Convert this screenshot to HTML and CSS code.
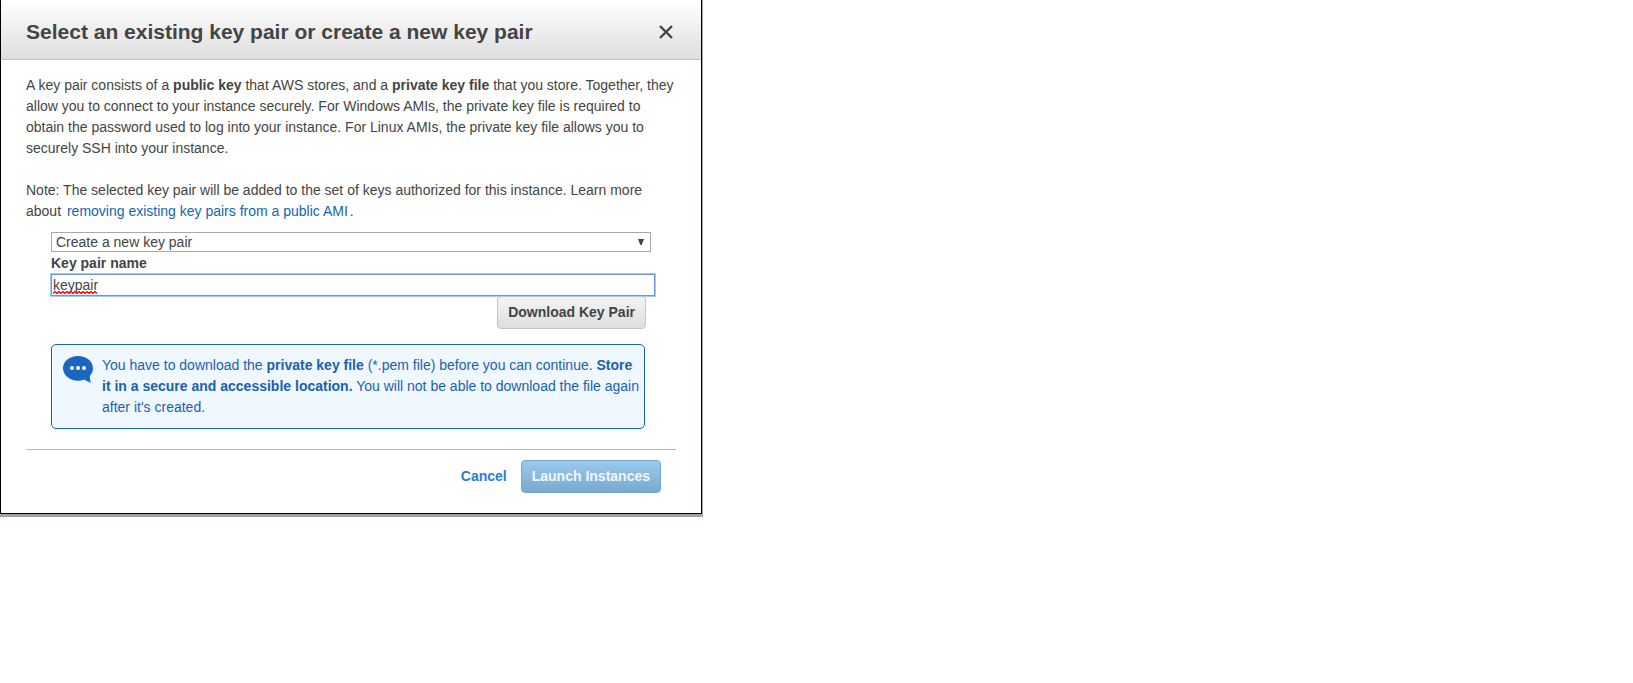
FILE: index.html
```html
<!DOCTYPE html>
<html lang="en">
<head>
<meta charset="utf-8">
<title>Select an existing key pair or create a new key pair</title>
<link rel="stylesheet" href="styles.css">
</head>
<body>
<div class="frame">
<main class="dialog" role="dialog" aria-labelledby="dialog-title">
  <header class="dialog-header">
    <h1 class="dialog-title" id="dialog-title">Select an existing key pair or create a new key pair</h1>
    <button class="close-button" type="button" aria-label="Close">
      <svg width="14" height="14" viewBox="0 0 14 14" aria-hidden="true"><path d="M1 1 13 13M13 1 1 13" fill="none" stroke="#444" stroke-width="2.4"/></svg>
    </button>
  </header>
  <form class="dialog-body">
    <p class="text">A key pair consists of a <b>public key</b> that AWS stores, and a <b>private key file</b> that you store. Together, they allow you to connect to your instance securely. For Windows AMIs, the private key file is required to obtain the password used to log into your instance. For Linux AMIs, the private key file allows you to securely SSH into your instance.</p>
    <p class="text">Note: The selected key pair will be added to the set of keys authorized for this instance. Learn more about <a class="link" href="#removing-key-pairs">removing existing key pairs from a public AMI</a>.</p>
    <div class="fields">
      <div class="select-wrap">
        <select class="select" aria-label="Key pair option">
          <option>Create a new key pair</option>
        </select>
        <svg class="select-arrow" width="6" height="6" viewBox="0 0 6 6" aria-hidden="true"><path d="M0 0h6L3.600 6H2.400z" fill="#444"/></svg>
      </div>
      <label class="label" for="key-name">Key pair name</label>
      <div class="input-wrap">
        <input class="input" id="key-name" type="text" value="keypair" spellcheck="false">
        <svg class="spelling-mark" width="45" height="3" viewBox="0 0 45 3" aria-hidden="true"><path d="M0 2.500l2-2 2 2 2-2 2 2 2-2 2 2 2-2 2 2 2-2 2 2 2-2 2 2 2-2 2 2 2-2 2 2 2-2 2 2 2-2 2 2 2-2 2 2" fill="none" stroke="#f00" stroke-width="1.3"/></svg>
      </div>
      <div class="download-row">
        <button class="button button-plain" type="button">Download Key Pair</button>
      </div>
      <div class="notice">
        <svg class="notice-icon" width="30" height="27" viewBox="0 0 30 27" aria-hidden="true">
          <path d="M15 0C23.300 0 30 5.300 30 12.200c0 3-1.200 5.700-3.200 7.800-.1 2.300.3 4.500 1.200 6.800-2.700-.7-4.800-1.800-6.600-3.200-1.900.8-4.100 1.200-6.400 1.200C6.700 24.800 0 19.200 0 12.300S6.700 0 15 0z" fill="#1a66c0"/>
          <circle cx="9" cy="12" r="2" fill="#fff"/><circle cx="15" cy="12" r="2" fill="#fff"/><circle cx="21" cy="12" r="2" fill="#fff"/>
        </svg>
        <p class="notice-text">You have to download the <b>private key file</b> (*.pem file) before you can continue. <b>Store it in a secure and accessible location.</b> You will not be able to download the file again after it's created.</p>
      </div>
    </div>
    <footer class="dialog-footer">
      <button class="cancel-button" type="button">Cancel</button>
      <button class="button button-primary" type="button">Launch Instances</button>
    </footer>
  </form>
</main>
</div>
</body>
</html>
```
FILE: styles.css
```css
* {
  box-sizing: border-box;
}

body {
  margin: 0;
  background: #fff;
  color: #444;
  font: 14px/21px "Liberation Sans", Arial, sans-serif;
}

button,
input,
select {
  margin: 0;
  color: inherit;
  font: inherit;
}

.frame {
  max-width: 703px;
  padding: 0 1px 3px 0;
  background: #a0a5ab;
}

.dialog {
  border: 1px solid #000;
  border-top: 0;
  background: #fff;
}

.dialog-header {
  display: flex;
  align-items: center;
  justify-content: space-between;
  padding: 18px 28px 13px 25px;
  border-bottom: 1px solid #c4c4c4;
  background: linear-gradient(#fff, #dedede);
}

.dialog-title {
  margin: 0;
  font-size: 21px;
  line-height: 28px;
}

.close-button {
  display: flex;
  padding: 0;
  border: 0;
  background: none;
}

.dialog-body {
  padding: 15px 25px 20px;
}

.text {
  margin: 0 0 21px;
}

.link {
  margin: 0 2px;
  color: #1166bb;
  text-decoration: none;
}

.fields {
  margin-top: -11px;
  padding: 0 21px 0 25px;
}

.select-wrap,
.input-wrap {
  position: relative;
}

.select-wrap {
  margin: 0 4px 1px 0;
}

.select {
  display: block;
  width: 100%;
  height: 20px;
  padding: 0 4px;
  border: 1px solid #a9a9a9;
  border-radius: 0;
  background: #fff;
  line-height: 18px;
  appearance: none;
}

.select-arrow {
  position: absolute;
  top: 7px;
  right: 7px;
}

.label {
  display: block;
  font-weight: bold;
}

.input {
  display: block;
  width: 100%;
  height: 22px;
  padding: 0 1px;
  border: 1px solid #7095dc;
  outline: 1px solid #a6c8fa;
}

.spelling-mark {
  position: absolute;
  top: 17px;
  left: 2px;
}

.download-row {
  display: flex;
  justify-content: flex-end;
  margin: 0 9px 15px 0;
}

.button {
  height: 33px;
  padding: 0 10px;
  border: 1px solid #c4c4c4;
  border-radius: 4px;
  font-weight: bold;
}

.button-plain {
  background: linear-gradient(#f4f4f4, #dedede);
}

.button-primary {
  border-color: #76a9d0;
  background: linear-gradient(#99c9ed, #78aacf);
  color: #f1f7fc;
}

.notice {
  display: flex;
  gap: 9px;
  margin-right: 10px;
  padding: 10px 4px 10px 11px;
  border: 1px solid #1166bb;
  border-radius: 5px;
  background: #f0f8ff;
  color: #1a5fb4;
}

.notice-icon {
  flex: none;
  margin-top: 1px;
}

.notice-text {
  margin: 0;
}

.dialog-footer {
  display: flex;
  align-items: center;
  justify-content: flex-end;
  gap: 14px;
  margin-top: 20px;
  padding: 10px 15px 0 0;
  border-top: 1px solid #b8b8b8;
}

.cancel-button {
  padding: 0;
  border: 0;
  background: none;
  color: #2a7bdc;
  font-weight: bold;
}
```
